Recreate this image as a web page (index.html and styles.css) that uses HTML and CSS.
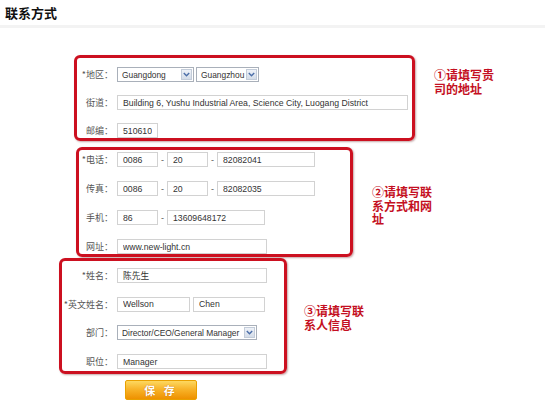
FILE: index.html
```html
<!DOCTYPE html>
<html lang="zh-CN">
<head>
  <meta charset="UTF-8" />
  <title>联系方式</title>
  <link rel="stylesheet" href="styles.css">
</head>
<body>

  <h2 class="title">联系方式</h2>

  <div class="form">

    <!-- 地址 -->
    <div class="group group-address">
      <div class="frame frame-address">
        <div class="row">
          <span class="label">*地区：</span>
          <span class="dropdown dd-province">
            <select><option>Guangdong</option></select>
            <span class="arrow"><svg width="7" height="5" viewBox="0 0 7 5"><path d="M0.8 1 L3.5 3.8 L6.2 1" fill="none" stroke="#4b6ea8" stroke-width="1.4"/></svg></span>
          </span>
          <span class="dropdown dd-city">
            <select><option>Guangzhou</option></select>
            <span class="arrow"><svg width="7" height="5" viewBox="0 0 7 5"><path d="M0.8 1 L3.5 3.8 L6.2 1" fill="none" stroke="#4b6ea8" stroke-width="1.4"/></svg></span>
          </span>
        </div>
        <div class="row">
          <span class="label">街道：</span>
          <input class="field f-address" type="text" value="Building 6, Yushu Industrial Area, Science City, Luogang District">
        </div>
        <div class="row">
          <span class="label">邮编：</span>
          <input class="field f-code" type="text" value="510610">
        </div>
      </div>
      <p class="note">①请填写贵司的地址</p>
    </div>

    <!-- 电话 / 网址 -->
    <div class="group group-contact">
      <div class="frame frame-contact">
        <div class="row">
          <span class="label">*电话：</span>
          <input class="field f-code" type="text" value="0086">
          <span class="dash">-</span>
          <input class="field f-code" type="text" value="20">
          <span class="dash">-</span>
          <input class="field f-num" type="text" value="82082041">
        </div>
        <div class="row">
          <span class="label">传真：</span>
          <input class="field f-code" type="text" value="0086">
          <span class="dash">-</span>
          <input class="field f-code" type="text" value="20">
          <span class="dash">-</span>
          <input class="field f-num" type="text" value="82082035">
        </div>
        <div class="row">
          <span class="label">手机：</span>
          <input class="field f-code" type="text" value="86">
          <span class="dash">-</span>
          <input class="field f-num" type="text" value="13609648172">
        </div>
        <div class="row">
          <span class="label">网址：</span>
          <input class="field f-wide" type="text" value="www.new-light.cn">
        </div>
      </div>
      <p class="note">②请填写联系方式和网址</p>
    </div>

    <!-- 联系人 -->
    <div class="group group-person">
      <div class="frame frame-person">
        <div class="row">
          <span class="label">*姓名：</span>
          <input class="field f-wide" type="text" value="陈先生">
        </div>
        <div class="row">
          <span class="label">*英文姓名：</span>
          <input class="field f-first" type="text" value="Wellson">
          <input class="field f-last" type="text" value="Chen">
        </div>
        <div class="row">
          <span class="label">部门：</span>
          <span class="dropdown dd-dept">
            <select><option>Director/CEO/General Manager</option></select>
            <span class="arrow"><svg width="7" height="5" viewBox="0 0 7 5"><path d="M0.8 1 L3.5 3.8 L6.2 1" fill="none" stroke="#4b6ea8" stroke-width="1.4"/></svg></span>
          </span>
        </div>
        <div class="row">
          <span class="label">职位：</span>
          <input class="field f-wide" type="text" value="Manager">
        </div>
      </div>
      <p class="note">③请填写联系人信息</p>
    </div>

    <div class="actions">
      <button class="save" type="button">保 存</button>
    </div>

  </div>

</body>
</html>
```

FILE: styles.css
```css
body {
  margin: 0;
  font-family: "Liberation Sans", Arial, "Noto Sans CJK SC", sans-serif;
  font-size: 9px;
  color: #333;
  background: #fff;
}

.title {
  margin: 0;
  padding: 6px 0 0 5px;
  height: 19px;
  font-family: "Noto Sans CJK SC", sans-serif;
  font-size: 13px;
  line-height: 14px;
  font-weight: bold;
  color: #111;
  border-bottom: 3px solid #f3f3f3;
}

.form {
  padding-top: 27px;
}

/* each group: red frame + note on its right */
.group {
  display: flex;
  align-items: flex-start;
}

.group-address {
  margin-left: 74px;
}

.group-contact {
  margin-left: 76px;
  margin-top: 6px;
}

.group-person {
  margin-left: 59px;
  margin-top: 1px;
}

.frame {
  box-sizing: border-box;
  display: flex;
  flex-direction: column;
  border: 3px solid #cc1020;
  border-radius: 6px;
  box-shadow: 1px 1px 2px rgba(90, 0, 0, 0.35);
}

.frame-address {
  width: 341px;
  padding: 9px 0 0;
  gap: 13px;
}

.frame-contact {
  width: 277px;
  padding: 2px 0 0;
  gap: 14px;
}

.frame-person {
  width: 228px;
  padding: 7px 0 2px;
  gap: 13.7px;
}

.row {
  display: flex;
  align-items: center;
  height: 15px;
}

.label {
  flex: none;
  box-sizing: border-box;
  padding-right: 4px;
  text-align: right;
  font-family: "Noto Sans CJK SC", sans-serif;
  font-size: 9px;
  color: #555;
}

.frame-address .label { width: 40px; }
.frame-contact .label { width: 38px; }
.frame-person .label { width: 55px; }

.field {
  box-sizing: border-box;
  height: 15px;
  margin: 0;
  padding: 0 5px;
  border: 1px solid #d2d2d2;
  background: #fff;
  font-family: "Liberation Sans", Arial, "Noto Sans CJK SC", sans-serif;
  font-size: 8.7px;
  color: #333;
  outline: none;
}

.f-code { width: 41px; }
.f-num { width: 98px; }
.f-wide { width: 150px; }
.f-address { width: 291px; }
.f-first { width: 73px; margin-right: 3px; }
.f-last { width: 72px; }

.dash {
  width: 9px;
  text-align: center;
  color: #555;
}

/* select with the little blue arrow button */
.dropdown {
  box-sizing: border-box;
  display: inline-flex;
  height: 15px;
  border: 1px solid #a9b0ba;
  background: #fff;
}

.dropdown select {
  flex: 1;
  min-width: 0;
  height: 13px;
  margin: 0;
  padding: 0 0 0 4px;
  border: 0;
  background: none;
  appearance: none;
  -webkit-appearance: none;
  font-family: "Liberation Sans", Arial, sans-serif;
  font-size: 8.4px;
  color: #333;
  outline: none;
}

.dd-province { width: 77px; margin-right: 2px; }
.dd-city { width: 63px; }
.dd-dept { width: 140px; }

.arrow {
  flex: none;
  box-sizing: border-box;
  width: 11px;
  margin: 1px;
  display: flex;
  align-items: center;
  justify-content: center;
  background: linear-gradient(#eef2f8, #d4dce8);
  border: 1px solid #c3ccd9;
}

.note {
  margin: 0;
  width: 61px;
  font-family: "Noto Sans CJK SC", sans-serif;
  font-size: 12px;
  line-height: 13.5px;
  font-weight: bold;
  color: #c40f22;
  word-break: break-all;
}

.group-address .note { margin: 13px 0 0 19px; }
.group-contact .note { margin: 38px 0 0 19px; }
.group-person .note { margin: 46px 0 0 17px; }

.actions {
  margin: 6px 0 0 125px;
}

.save {
  width: 72px;
  height: 20px;
  padding: 0;
  border: 1px solid #e9a000;
  border-radius: 2px;
  background: linear-gradient(#fdd860, #f8b42a 45%, #ee9100);
  color: #fff;
  font-family: "Noto Sans CJK SC", sans-serif;
  font-size: 11px;
  font-weight: bold;
  letter-spacing: 3px;
  text-shadow: 0 0 1px #b85c00;
  cursor: pointer;
}
```
